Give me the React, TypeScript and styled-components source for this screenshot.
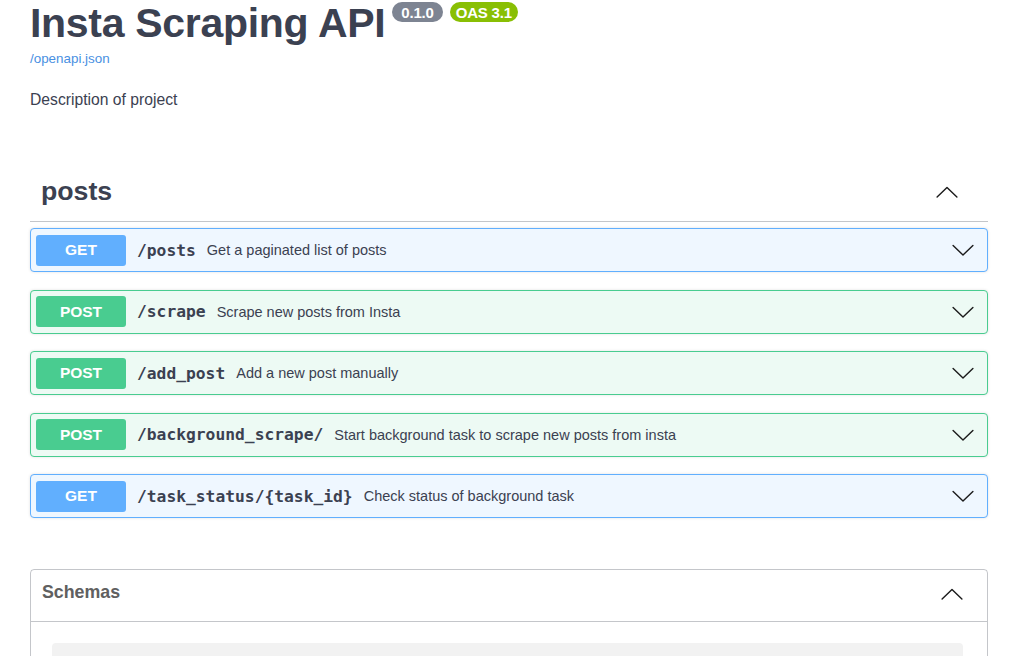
import React from "react";
import styled, { createGlobalStyle } from "styled-components";

const GlobalStyle = createGlobalStyle`
  html, body { margin: 0; padding: 0; background: #fff; }
  body { font-family: "Liberation Sans", Arial, sans-serif; color: #3b4151; }
  * { box-sizing: border-box; }
`;

const Page = styled.div`
  width: 1016px;
  padding: 0 28px 0 30px;
`;

const Info = styled.section`
  display: flex;
  flex-direction: column;
  align-items: flex-start;
`;

const TitleRow = styled.div`
  display: flex;
  align-items: flex-start;
  height: 46px;
`;

const Title = styled.h1`
  margin: 0;
  font-size: 41px;
  line-height: 46px;
  font-weight: 700;
  color: #3b4151;
  letter-spacing: -0.3px;
`;

const Badges = styled.div`
  display: flex;
  gap: 7px;
  margin: 2px 0 0 7px;
`;

const Badge = styled.span<{ $bg: string; $pad: number }>`
  display: inline-flex;
  align-items: center;
  height: 20px;
  padding: 0 ${(p) => p.$pad}px;
  border-radius: 57px;
  background: ${(p) => p.$bg};
  color: #fff;
  font-weight: 700;
  font-size: 15px;
  letter-spacing: -0.2px;
`;

const SpecLink = styled.a`
  margin-top: 5px;
  font-size: 13.4px;
  line-height: 16px;
  color: #4990e2;
  text-decoration: none;
`;

const Description = styled.p`
  margin: 23px 0 0;
  font-size: 15.7px;
  line-height: 20px;
  color: #3b4151;
`;

const TagSection = styled.section`
  margin-top: 52px;
`;

const TagHeader = styled.div`
  display: flex;
  align-items: center;
  justify-content: space-between;
  height: 60px;
  border-bottom: 1px solid rgba(59, 65, 81, 0.3);
  padding: 0 30px 0 11px;
`;

const TagName = styled.h3`
  margin: 0;
  font-size: 26.7px;
  font-weight: 700;
  color: #3b4151;
`;

const OpList = styled.div`
  display: flex;
  flex-direction: column;
  gap: 17.5px;
  padding-top: 6px;
`;

const Opblock = styled.div<{ $border: string; $bg: string }>`
  display: flex;
  align-items: center;
  height: 44px;
  padding: 0 13px 0 5px;
  border: 1px solid ${(p) => p.$border};
  background: ${(p) => p.$bg};
  border-radius: 4px;
  box-shadow: 0 0 3px rgba(0, 0, 0, 0.12);
`;

const Method = styled.span<{ $bg: string }>`
  display: flex;
  align-items: center;
  justify-content: center;
  width: 90px;
  height: 31px;
  border-radius: 3px;
  background: ${(p) => p.$bg};
  color: #fff;
  font-weight: 700;
  font-size: 15.5px;
`;

const Path = styled.span`
  padding: 0 11px 0 11px;
  font-family: "DejaVu Sans Mono", "Liberation Mono", monospace;
  font-weight: 700;
  font-size: 16.3px;
  color: #3b4151;
`;

const Summary = styled.span`
  flex: 1;
  font-size: 14.5px;
  color: #3b4151;
`;

const Schemas = styled.section`
  margin-top: 51px;
  border: 1px solid rgba(59, 65, 81, 0.3);
  border-radius: 4px;
  height: 120px;
`;

const SchemasHeader = styled.div`
  display: flex;
  align-items: center;
  justify-content: space-between;
  height: 52px;
  padding: 0 24px 4px 11px;
  border-bottom: 1px solid rgba(59, 65, 81, 0.3);
`;

const SchemasTitle = styled.h4`
  margin: 0 0 2px;
  font-size: 17.8px;
  font-weight: 700;
  color: #606060;
`;

const SchemasBody = styled.div`
  padding: 21px 24px 0 21px;
`;

const ModelBox = styled.div`
  height: 60px;
  border-radius: 4px;
  background: #f2f2f2;
`;

const Chevron = ({ up }: { up?: boolean }) => (
  <svg width="22" height="22" viewBox="0 0 20 20" style={{ flexShrink: 0 }}>
    <path
      d={up ? "M1 14.5 L10 6 L19 14.5" : "M1 6 L10 14.5 L19 6"}
      fill="none"
      stroke="#1b1b1b"
      strokeWidth="1.3"
      strokeLinecap="round"
      strokeLinejoin="round"
    />
  </svg>
);

const ops = [
  { method: "GET", path: "/posts", desc: "Get a paginated list of posts" },
  { method: "POST", path: "/scrape", desc: "Scrape new posts from Insta" },
  { method: "POST", path: "/add_post", desc: "Add a new post manually" },
  { method: "POST", path: "/background_scrape/", desc: "Start background task to scrape new posts from insta" },
  { method: "GET", path: "/task_status/{task_id}", desc: "Check status of background task" },
];

const palette: Record<string, { main: string; bg: string }> = {
  GET: { main: "#61affe", bg: "#eff7ff" },
  POST: { main: "#49cc90", bg: "#edfaf4" },
};

export default function App() {
  return (
    <>
      <GlobalStyle />
      <Page>
        <Info>
          <TitleRow>
            <Title>Insta Scraping API</Title>
            <Badges>
              <Badge $bg="#7d8492" $pad={9}>0.1.0</Badge>
              <Badge $bg="#89bf04" $pad={6}>OAS 3.1</Badge>
            </Badges>
          </TitleRow>
          <SpecLink href="#">/openapi.json</SpecLink>
          <Description>Description of project</Description>
        </Info>

        <TagSection>
          <TagHeader>
            <TagName>posts</TagName>
            <Chevron up />
          </TagHeader>
          <OpList>
            {ops.map((op) => (
              <Opblock key={op.path} $border={palette[op.method].main} $bg={palette[op.method].bg}>
                <Method $bg={palette[op.method].main}>{op.method}</Method>
                <Path>{op.path}</Path>
                <Summary>{op.desc}</Summary>
                <Chevron />
              </Opblock>
            ))}
          </OpList>
        </TagSection>

        <Schemas>
          <SchemasHeader>
            <SchemasTitle>Schemas</SchemasTitle>
            <Chevron up />
          </SchemasHeader>
          <SchemasBody>
            <ModelBox />
          </SchemasBody>
        </Schemas>
      </Page>
    </>
  );
}
